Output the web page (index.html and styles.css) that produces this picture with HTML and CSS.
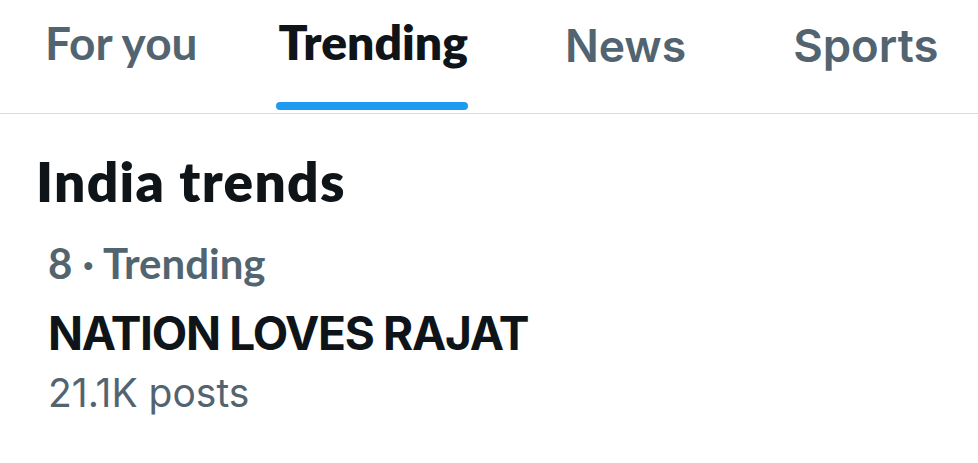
FILE: index.html
```html
<!DOCTYPE html>
<html>
<head>
<meta charset="utf-8">
<link rel="stylesheet" href="styles.css">
</head>
<body>
<nav class="tabs">
  <div class="tab tab-foryou"><span class="tab-label lato">For you</span></div>
  <div class="tab tab-trending active"><span class="tab-label lato">Trending</span><span class="indicator"></span></div>
  <div class="tab tab-news"><span class="tab-label">News</span></div>
  <div class="tab tab-sports"><span class="tab-label">Sports</span></div>
</nav>
<section class="content">
  <h1 class="section-title">India trends</h1>
  <div class="trend">
    <div class="trend-meta">8 · Trending</div>
    <div class="trend-name">NATION LOVES RAJAT</div>
    <div class="trend-count">21.1K posts</div>
  </div>
</section>
</body>
</html>
```

FILE: styles.css
```css
* { box-sizing: border-box; }
html, body { margin: 0; padding: 0; background: #ffffff; }
body {
  width: 978px;
  height: 463px;
  overflow: hidden;
  font-family: Inter, "Liberation Sans", sans-serif;
  color: #0f1419;
}
.tabs {
  display: flex;
  height: 114px;
  border-bottom: 1.5px solid #d6dde1;
  padding-left: 45px;
}
.tab {
  position: relative;
  display: flex;
  flex-direction: column;
  align-items: center;
  height: 100%;
}
.tab-label {
  font-size: 45.5px;
  font-weight: 600;
  color: #536471;
  line-height: 1;
  margin-top: 23px;
}
.lato {
  font-family: Lato, sans-serif;
  font-size: 46px;
  font-weight: 700;
  margin-top: 20px;
}
.tab-trending { margin-left: 81px; }
.tab-trending .tab-label { font-size: 48px; margin-top: 18px; }
.tab-news { margin-left: 97px; }
.tab-news .tab-label { font-size: 44.5px; margin-top: 24px; }
.tab-sports { margin-left: 107px; }
.tab.active .tab-label { color: #0f1419; font-weight: 800; }
.indicator {
  position: absolute;
  left: -3px;
  right: 0;
  top: 102px;
  height: 8px;
  border-radius: 4px;
  background: #1d9bf0;
}
.content { padding: 0 0 0 36px; }
.section-title {
  margin: 0;
  padding-top: 37px;
  font-family: Lato, sans-serif;
  font-weight: 800;
  font-size: 55px;
  letter-spacing: 1.3px;
  line-height: 1.1;
  color: #0f1419;
}
.trend { padding-left: 12px; }
.trend-meta {
  font-family: Lato, sans-serif;
  font-weight: 700;
  font-size: 42px;
  color: #536471;
  margin-top: 26px;
  line-height: 1.2;
}
.trend-name {
  font-weight: 700;
  font-size: 46px;
  letter-spacing: -1.3px;
  color: #0f1419;
  margin-top: 18px;
  line-height: 1.2;
}
.trend-count {
  font-weight: 400;
  font-size: 39px;
  color: #536471;
  margin-top: 9px;
  line-height: 1.2;
}
```
